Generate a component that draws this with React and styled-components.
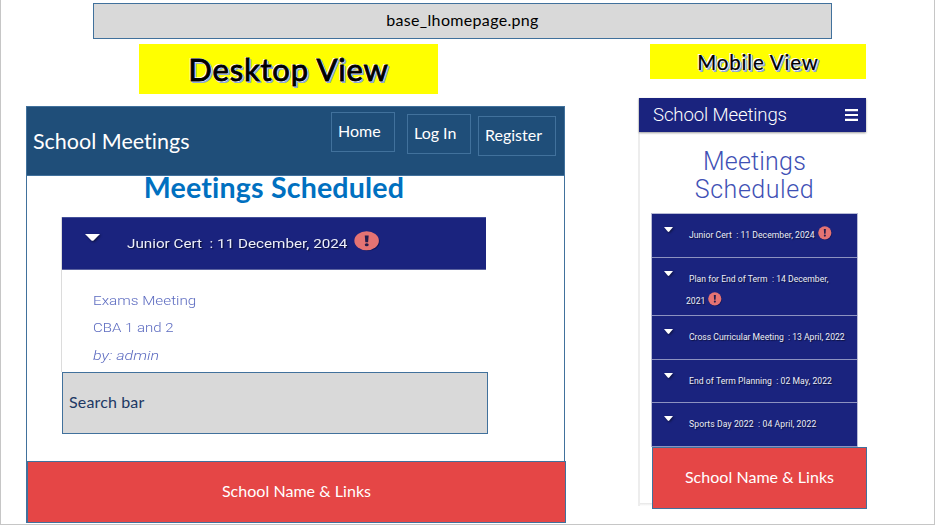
import React from "react";
import styled, { createGlobalStyle } from "styled-components";

const GlobalStyle = createGlobalStyle`
  *, *::before, *::after { box-sizing: border-box; }
  body { margin: 0; background: #fff; overflow: hidden; }
  p, h1, h2, h3 { margin: 0; font-weight: inherit; }
`;

const office = `"Lato", "Liberation Sans", sans-serif`;
const web = `"Roboto", "Liberation Sans", sans-serif`;
const outline = "#41719c";

const Slide = styled.main`
  width: 935px;
  height: 525px;
  border: 1px solid #c6c6c6;
  border-top: 0;
  padding-top: 3px;
  display: flex;
  flex-direction: column;
  font-family: ${office};
  font-variant-ligatures: none;
  background: #fff;
`;

const FileBar = styled.header`
  width: 739px;
  height: 36px;
  margin-left: 92px;
  border: 1px solid ${outline};
  background: #d9d9d9;
  display: flex;
  align-items: center;
  justify-content: center;
  padding-bottom: 3px;
  font-size: 16px;
  letter-spacing: 0.33px;
  color: #000;
`;

const Views = styled.div`
  display: flex;
  align-items: flex-start;
  padding-top: 5px;
`;

const DesktopView = styled.section`
  width: 540px;
  margin-left: 25px;
  display: flex;
  flex-direction: column;
`;

const MobileView = styled.section`
  width: 229px;
  margin-left: 72px;
  display: flex;
  flex-direction: column;
`;

const ViewLabel = styled.h1`
  flex: none;
  width: ${(p) => p.$width}px;
  height: ${(p) => p.$height}px;
  margin-left: ${(p) => p.$left}px;
  display: flex;
  align-items: center;
  justify-content: center;
  background: #ff0;
  color: #000;
  font-size: ${(p) => p.$size}px;
  font-weight: 400;
  -webkit-text-stroke: ${(p) => p.$stroke}px #000;
  letter-spacing: ${(p) => p.$spacing}px;
  text-shadow: -1px -1px 0 #fff, 1px 0 0 #fff, 0 1px 0 #fff, 2px 1px 0 #8faadc, 1px 2px 0 #8faadc, 2px 2px 0 #8faadc;
`;

const Panel = styled.div`
  width: 539px;
  height: 417px;
  margin-top: 12px;
  border: 1px solid ${outline};
  display: flex;
  flex-direction: column;
`;

const NavBar = styled.nav`
  height: 69px;
  flex: none;
  background: #1f4e79;
  border-bottom: 1px solid ${outline};
  color: #fff;
  display: flex;
  align-items: flex-start;
  padding: 5px 8px 0 6px;
`;

const Brand = styled.h2`
  flex: 1;
  margin-top: 15px;
  font-size: 21.5px;
  line-height: 28px;
`;

const NavButton = styled.a`
  width: ${(p) => p.$width}px;
  height: 40px;
  margin: ${(p) => p.$drop}px 0 0 ${(p) => p.$gap}px;
  border: 1px solid ${outline};
  padding-left: 6px;
  font-size: 16px;
  line-height: 36px;
  white-space: nowrap;
`;

const Heading = styled.h2`
  width: 494px;
  height: 41px;
  flex: none;
  text-align: center;
  font-size: 28.6px;
  font-weight: 700;
  letter-spacing: 0.16px;
  line-height: 23px;
  color: #0070c0;
`;

const DesktopCard = styled.article`
  width: 425px;
  height: 155px;
  flex: none;
  margin-left: 34px;
  border-left: 1px solid #dcdcdc;
  font-family: ${web};
`;

const CardHead = styled.header`
  height: 53px;
  display: flex;
  background: #1a237e;
  border-top: 1px solid #44509a;
  border-bottom: 1px solid #5c639f;
  color: #eceef8;
  padding-left: 23px;
`;

const CardCaret = styled.svg`
  flex: none;
  width: 15px;
  height: 7px;
  margin-top: 16px;
  filter: drop-shadow(1px 1px 1px #0008);
`;

const Stretch = styled.span`
  display: block;
  width: max-content;
  transform: scaleX(${(p) => p.$x});
  transform-origin: left center;
  white-space: pre;
`;

const CardTitle = styled.h3`
  width: 227px;
  margin-left: 27px;
  font-size: 12.2px;
  line-height: 52px;
  text-shadow: 1px 1px 1px #0008;
`;

const CardBadge = styled.svg`
  flex: none;
  width: 26px;
  height: 20px;
  margin-top: 13px;
`;

const CardBody = styled.div`
  padding: 18px 0 0 31px;
  color: #5c6bc0;
  font-size: 12.2px;
  font-weight: 300;
  line-height: 27.3px;
`;

const SearchBox = styled.div`
  width: 426px;
  height: 62px;
  flex: none;
  margin-left: 35px;
  border: 1px solid ${outline};
  background: #d9d9d9;
  color: #203864;
  font-size: 16px;
  letter-spacing: 0.15px;
  line-height: 58px;
  padding-left: 6px;
`;

const Footer = styled.footer`
  flex: none;
  width: ${(p) => p.$width}px;
  height: 62px;
  margin: ${(p) => p.$top}px 0 0 ${(p) => p.$left}px;
  background: #e54646;
  border: 1px solid ${outline};
  color: #fff;
  font-family: ${office};
  font-size: 16px;
  letter-spacing: 0.04px;
  line-height: 58px;
  text-align: center;
`;

const Phone = styled.div`
  width: 229px;
  height: 408px;
  margin-top: 19px;
  border-left: 2px solid #ededed;
  background: linear-gradient(#e6e6e6, #fff) 0 100% / 13px 3px no-repeat;
  font-family: ${web};
`;

const PhoneBar = styled.nav`
  height: 34px;
  width: 227px;
  margin-left: -1px;
  padding: 0 8px 0 14px;
  display: flex;
  align-items: center;
  justify-content: space-between;
  background: #1a237e;
  color: #fff;
  font-size: 18.6px;
  letter-spacing: -0.13px;
  font-weight: 300;
  line-height: 34px;
  box-shadow: 0 1px 2px #0006;
`;

const Burger = styled.svg`
  width: 13px;
  height: 12px;
`;

const PhoneHeading = styled.h2`
  height: 81px;
  padding: 16px 0 0 2px;
  text-align: center;
  font-size: 25px;
  font-weight: 300;
  line-height: 28px;
  color: #3f51b5;
`;

const HeadingLine = styled.span`
  display: block;
  letter-spacing: ${(p) => p.$spacing}px;
`;

const MeetingList = styled.ul`
  width: 207px;
  height: 234px;
  margin: 0 0 0 11px;
  padding: 0;
  list-style: none;
  border: 1px solid #b8bbd6;
  border-width: 1px 1px 0;
  background: #1a237e;
`;

const Meeting = styled.li`
  height: ${(p) => (p.$tall ? 58.5 : 43.5)}px;
  display: flex;
  border-bottom: 1px solid #8d92c0;
  padding-left: 12px;
  color: #eceef8;
`;

const RowCaret = styled.svg`
  flex: none;
  width: 9px;
  height: 5px;
  margin-top: 13px;
  filter: drop-shadow(1px 1px 1px #0008);
`;

const MeetingText = styled.p`
  margin: 10px 0 0 13px;
  text-indent: 3px;
  font-size: 8.6px;
  line-height: 22px;
  letter-spacing: ${(p) => p.$spacing || 0}px;
  white-space: pre;
  text-shadow: 1px 1px 1px #0008;
`;

const RowBadge = styled.svg`
  width: 14px;
  height: 14px;
  margin: -5px 0 0 3px;
  vertical-align: middle;
`;

const Alert = ({ as: Svg }) => (
  <Svg viewBox="0 0 14 14" preserveAspectRatio="none" aria-label="alert">
    <circle cx="7.5" cy="7.6" r="6.4" fill="#0b114f" opacity=".7" />
    <circle cx="6.8" cy="6.8" r="6.6" fill="#e57373" />
    <path d="M5.8 3.1H7.9L7.6 7.8H6.1Z" fill="#241d4d" />
    <circle cx="6.85" cy="9.6" r="1.05" fill="#241d4d" />
  </Svg>
);

const caretPath = <path d="M0 0H16L9.4 7.2Q8 8.4 6.6 7.2Z" fill="#fff" />;

const meetings = [
  { text: "Junior Cert  : 11 December, 2024", alert: true, spacing: 0.04 },
  { text: "Plan for End of Term  : 14 December,\n2021", alert: true, tall: true, spacing: 0.02 },
  { text: "Cross Curricular Meeting  : 13 April, 2022", spacing: 0 },
  { text: "End of Term Planning  : 02 May, 2022", spacing: 0.06 },
  { text: "Sports Day 2022  : 04 April, 2022", spacing: 0.1 },
];

export default function App() {
  return (
    <>
      <GlobalStyle />
      <Slide>
        <FileBar>base_lhomepage.png</FileBar>
        <Views>
          <DesktopView>
            <ViewLabel $width={299} $height={50} $left={113} $size={31} $stroke={0.9} $spacing={0.8}>
              Desktop View
            </ViewLabel>
            <Panel>
              <NavBar>
                <Brand>School Meetings</Brand>
                <NavButton $width={64} $drop={0} $gap={0}>Home</NavButton>
                <NavButton $width={64} $drop={2} $gap={12}>Log In</NavButton>
                <NavButton $width={78} $drop={4} $gap={7}>Register</NavButton>
              </NavBar>
              <Heading>Meetings Scheduled</Heading>
              <DesktopCard>
                <CardHead>
                  <CardCaret viewBox="0 0 16 8" preserveAspectRatio="none">{caretPath}</CardCaret>
                  <CardTitle>
                    <Stretch $x={1.25}>{"Junior Cert  : 11 December, 2024"}</Stretch>
                  </CardTitle>
                  <Alert as={CardBadge} />
                </CardHead>
                <CardBody>
                  <Stretch $x={1.25}>Exams Meeting</Stretch>
                  <Stretch $x={1.23}>CBA 1 and 2</Stretch>
                  <Stretch $x={1.32}><em>by: admin</em></Stretch>
                </CardBody>
              </DesktopCard>
              <SearchBox>Search bar</SearchBox>
              <Footer $width={539} $top={27} $left={0}>School Name &amp; Links</Footer>
            </Panel>
          </DesktopView>
          <MobileView>
            <ViewLabel $width={216} $height={35} $left={12} $size={20.5} $stroke={0.25} $spacing={0.8}>
              Mobile View
            </ViewLabel>
            <Phone>
              <PhoneBar>
                School Meetings
                <Burger viewBox="0 0 13 12">
                  <path d="M0 1.2H13M0 6H13M0 10.8H13" stroke="#fff" strokeWidth="2.2" />
                </Burger>
              </PhoneBar>
              <PhoneHeading>
                <HeadingLine $spacing={0.2}>Meetings</HeadingLine>
                <HeadingLine $spacing={0.55}>Scheduled</HeadingLine>
              </PhoneHeading>
              <MeetingList>
                {meetings.map((m) => (
                  <Meeting key={m.text} $tall={m.tall}>
                    <RowCaret viewBox="0 0 16 8" preserveAspectRatio="none">{caretPath}</RowCaret>
                    <MeetingText $spacing={m.spacing}>
                      {m.text}
                      {m.alert && <Alert as={RowBadge} />}
                    </MeetingText>
                  </Meeting>
                ))}
              </MeetingList>
              <Footer $width={215} $top={0} $left={12}>School Name &amp; Links</Footer>
            </Phone>
          </MobileView>
        </Views>
      </Slide>
    </>
  );
}
